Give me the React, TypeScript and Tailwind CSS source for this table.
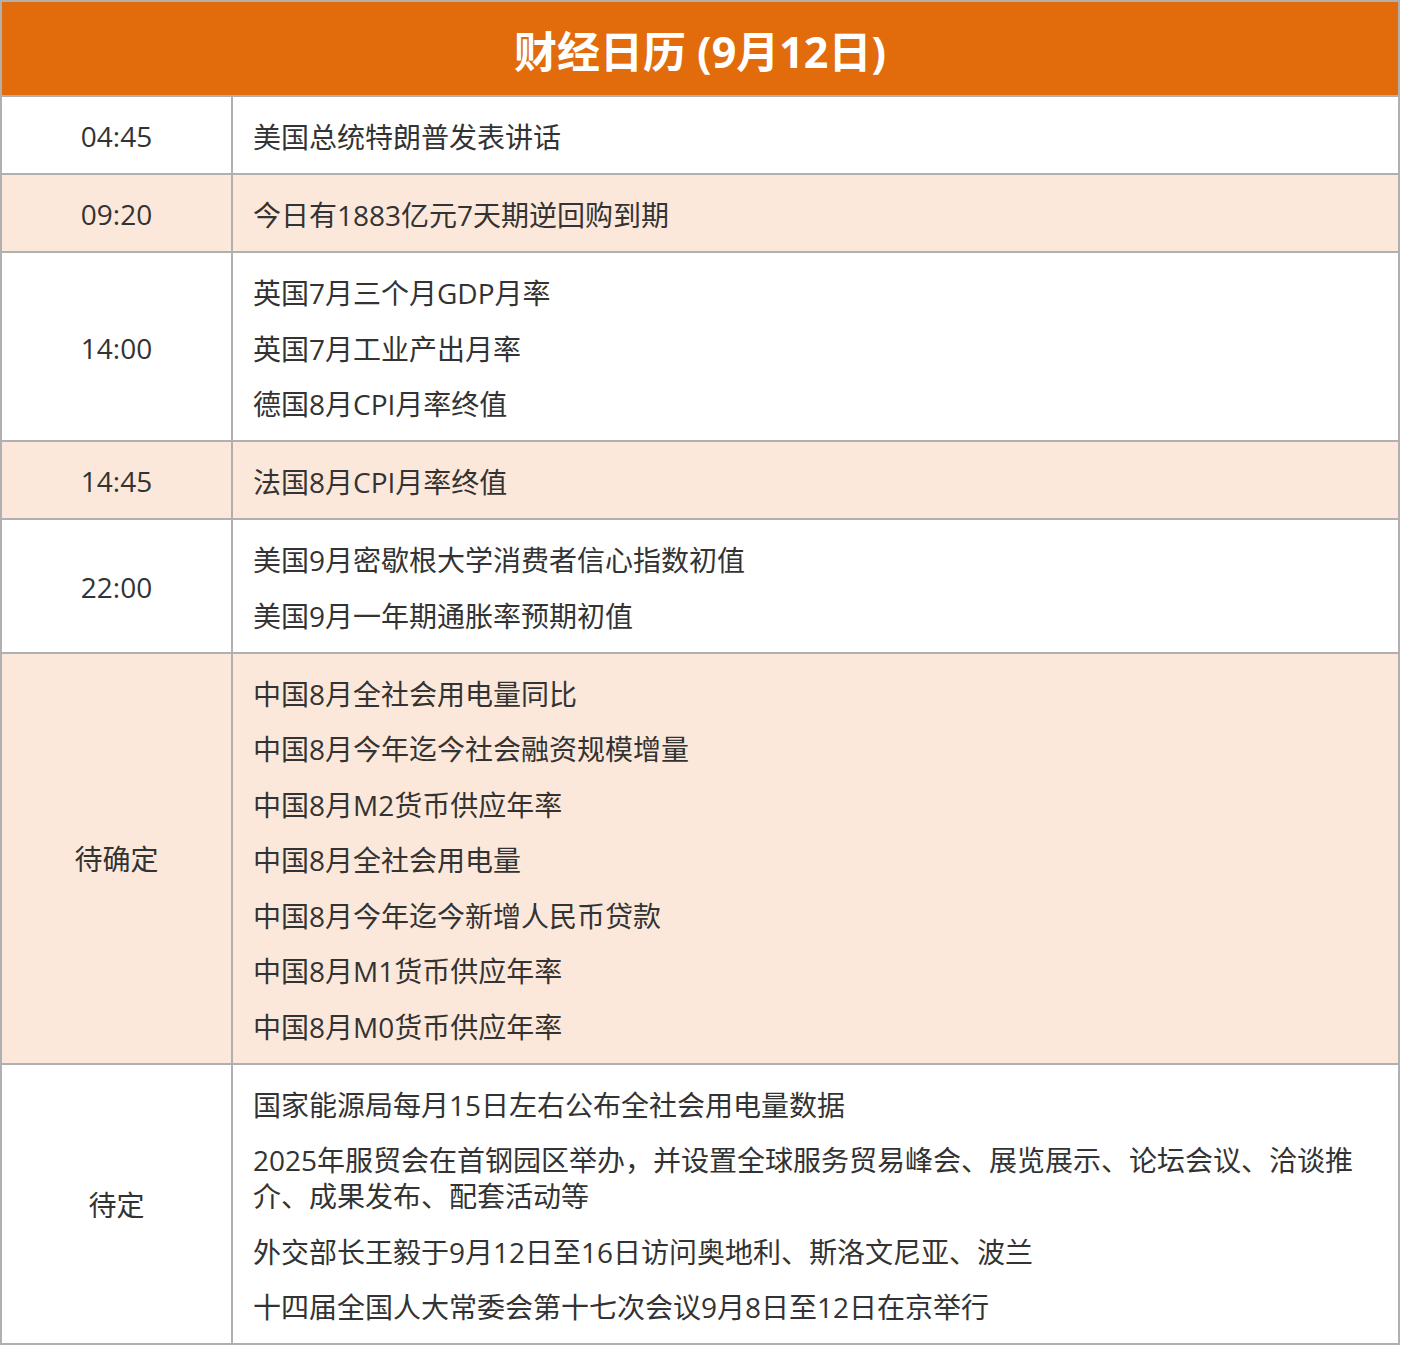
const rows = [
  { time: '04:45', items: ['美国总统特朗普发表讲话'], shaded: false },
  { time: '09:20', items: ['今日有1883亿元7天期逆回购到期'], shaded: true },
  { time: '14:00', items: ['英国7月三个月GDP月率', '英国7月工业产出月率', '德国8月CPI月率终值'], shaded: false },
  { time: '14:45', items: ['法国8月CPI月率终值'], shaded: true },
  { time: '22:00', items: ['美国9月密歇根大学消费者信心指数初值', '美国9月一年期通胀率预期初值'], shaded: false },
  {
    time: '待确定',
    items: [
      '中国8月全社会用电量同比',
      '中国8月今年迄今社会融资规模增量',
      '中国8月M2货币供应年率',
      '中国8月全社会用电量',
      '中国8月今年迄今新增人民币贷款',
      '中国8月M1货币供应年率',
      '中国8月M0货币供应年率',
    ],
    shaded: true,
  },
  {
    time: '待定',
    items: [
      '国家能源局每月15日左右公布全社会用电量数据',
      '2025年服贸会在首钢园区举办，并设置全球服务贸易峰会、展览展示、论坛会议、洽谈推介、成果发布、配套活动等',
      '外交部长王毅于9月12日至16日访问奥地利、斯洛文尼亚、波兰',
      '十四届全国人大常委会第十七次会议9月8日至12日在京举行',
    ],
    shaded: false,
  },
];

export default function App() {
  return (
    <div
      className="w-[1400px] bg-white text-[#333333]"
      style={{ fontFamily: '"Open Sans", "Noto Sans CJK SC", sans-serif' }}
    >
      <div className="border-2 border-[#b0b0b0]">
        {/* Header */}
        <div className="h-[93px] bg-[#e26c0b] flex items-center justify-center pt-[6px]">
          <h1 className="text-[43px] font-bold text-white leading-none">财经日历 (9月12日)</h1>
        </div>

        {/* Rows */}
        {rows.map((row, i) => (
          <div
            key={i}
            className={`grid grid-cols-[229px_1fr] border-t-2 border-[#b0b0b0] ${row.shaded ? 'bg-[#fce8da]' : 'bg-white'}`}
          >
            <div className="flex items-center justify-center text-[28px] pt-[2px]">{row.time}</div>
            <div className="border-l-2 border-[#b0b0b0] pl-5 pr-10 pt-[12.5px] pb-[8px]">
              {row.items.map((item, j) => (
                <div key={j} className="py-[9.75px] text-[28px] leading-[36px]">
                  {item}
                </div>
              ))}
            </div>
          </div>
        ))}
      </div>
    </div>
  );
}
